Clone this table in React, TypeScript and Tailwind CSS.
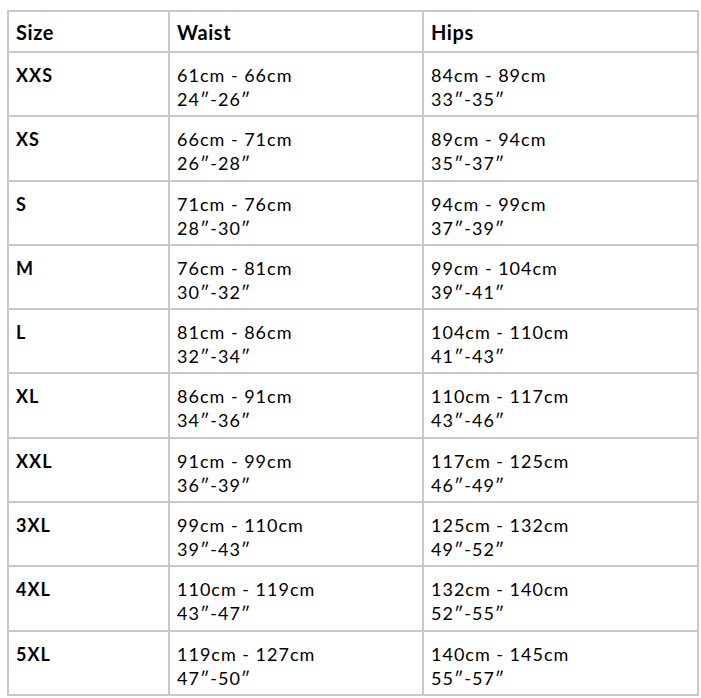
const ROWS = [
  { size: "XXS", waist: ["61cm - 66cm", "24″-26″"], hips: ["84cm - 89cm", "33″-35″"] },
  { size: "XS", waist: ["66cm - 71cm", "26″-28″"], hips: ["89cm - 94cm", "35″-37″"] },
  { size: "S", waist: ["71cm - 76cm", "28″-30″"], hips: ["94cm - 99cm", "37″-39″"] },
  { size: "M", waist: ["76cm - 81cm", "30″-32″"], hips: ["99cm - 104cm", "39″-41″"] },
  { size: "L", waist: ["81cm - 86cm", "32″-34″"], hips: ["104cm - 110cm", "41″-43″"] },
  { size: "XL", waist: ["86cm - 91cm", "34″-36″"], hips: ["110cm - 117cm", "43″-46″"] },
  { size: "XXL", waist: ["91cm - 99cm", "36″-39″"], hips: ["117cm - 125cm", "46″-49″"] },
  { size: "3XL", waist: ["99cm - 110cm", "39″-43″"], hips: ["125cm - 132cm", "49″-52″"] },
  { size: "4XL", waist: ["110cm - 119cm", "43″-47″"], hips: ["132cm - 140cm", "52″-55″"] },
  { size: "5XL", waist: ["119cm - 127cm", "47″-50″"], hips: ["140cm - 145cm", "55″-57″"] },
];

const cell = "border-2 border-[#c8c8c8] align-top pl-[7px] pt-[10px]";

export default function App() {
  return (
    <div className="bg-white w-[701px] h-[698px] pt-[10px] pl-[7px] text-black" style={{ fontFamily: "Lato, 'DejaVu Sans', sans-serif" }}>
      <table className="border-collapse table-fixed w-[692px]">
        <colgroup>
          <col className="w-[161px]" />
          <col className="w-[254px]" />
          <col className="w-[275px]" />
        </colgroup>
        <thead>
          <tr className="h-[41px]">
            {["Size", "Waist", "Hips"].map((h) => (
              <th key={h} className="border-2 border-[#c8c8c8] text-left pl-[7px] text-[20px] font-bold leading-none tracking-[0.6px]">
                {h}
              </th>
            ))}
          </tr>
        </thead>
        <tbody>
          {ROWS.map((r) => (
            <tr key={r.size} className="h-[64.3px]">
              <td className={cell + " text-[18px] font-bold leading-[24px] tracking-[1px]"}>{r.size}</td>
              <td className={cell + " text-[18px] leading-[24px] tracking-[1px]"}>
                <div>{r.waist[0]}</div>
                <div>{r.waist[1]}</div>
              </td>
              <td className={cell + " text-[18px] leading-[24px] tracking-[1px]"}>
                <div>{r.hips[0]}</div>
                <div>{r.hips[1]}</div>
              </td>
            </tr>
          ))}
        </tbody>
      </table>
    </div>
  );
}
